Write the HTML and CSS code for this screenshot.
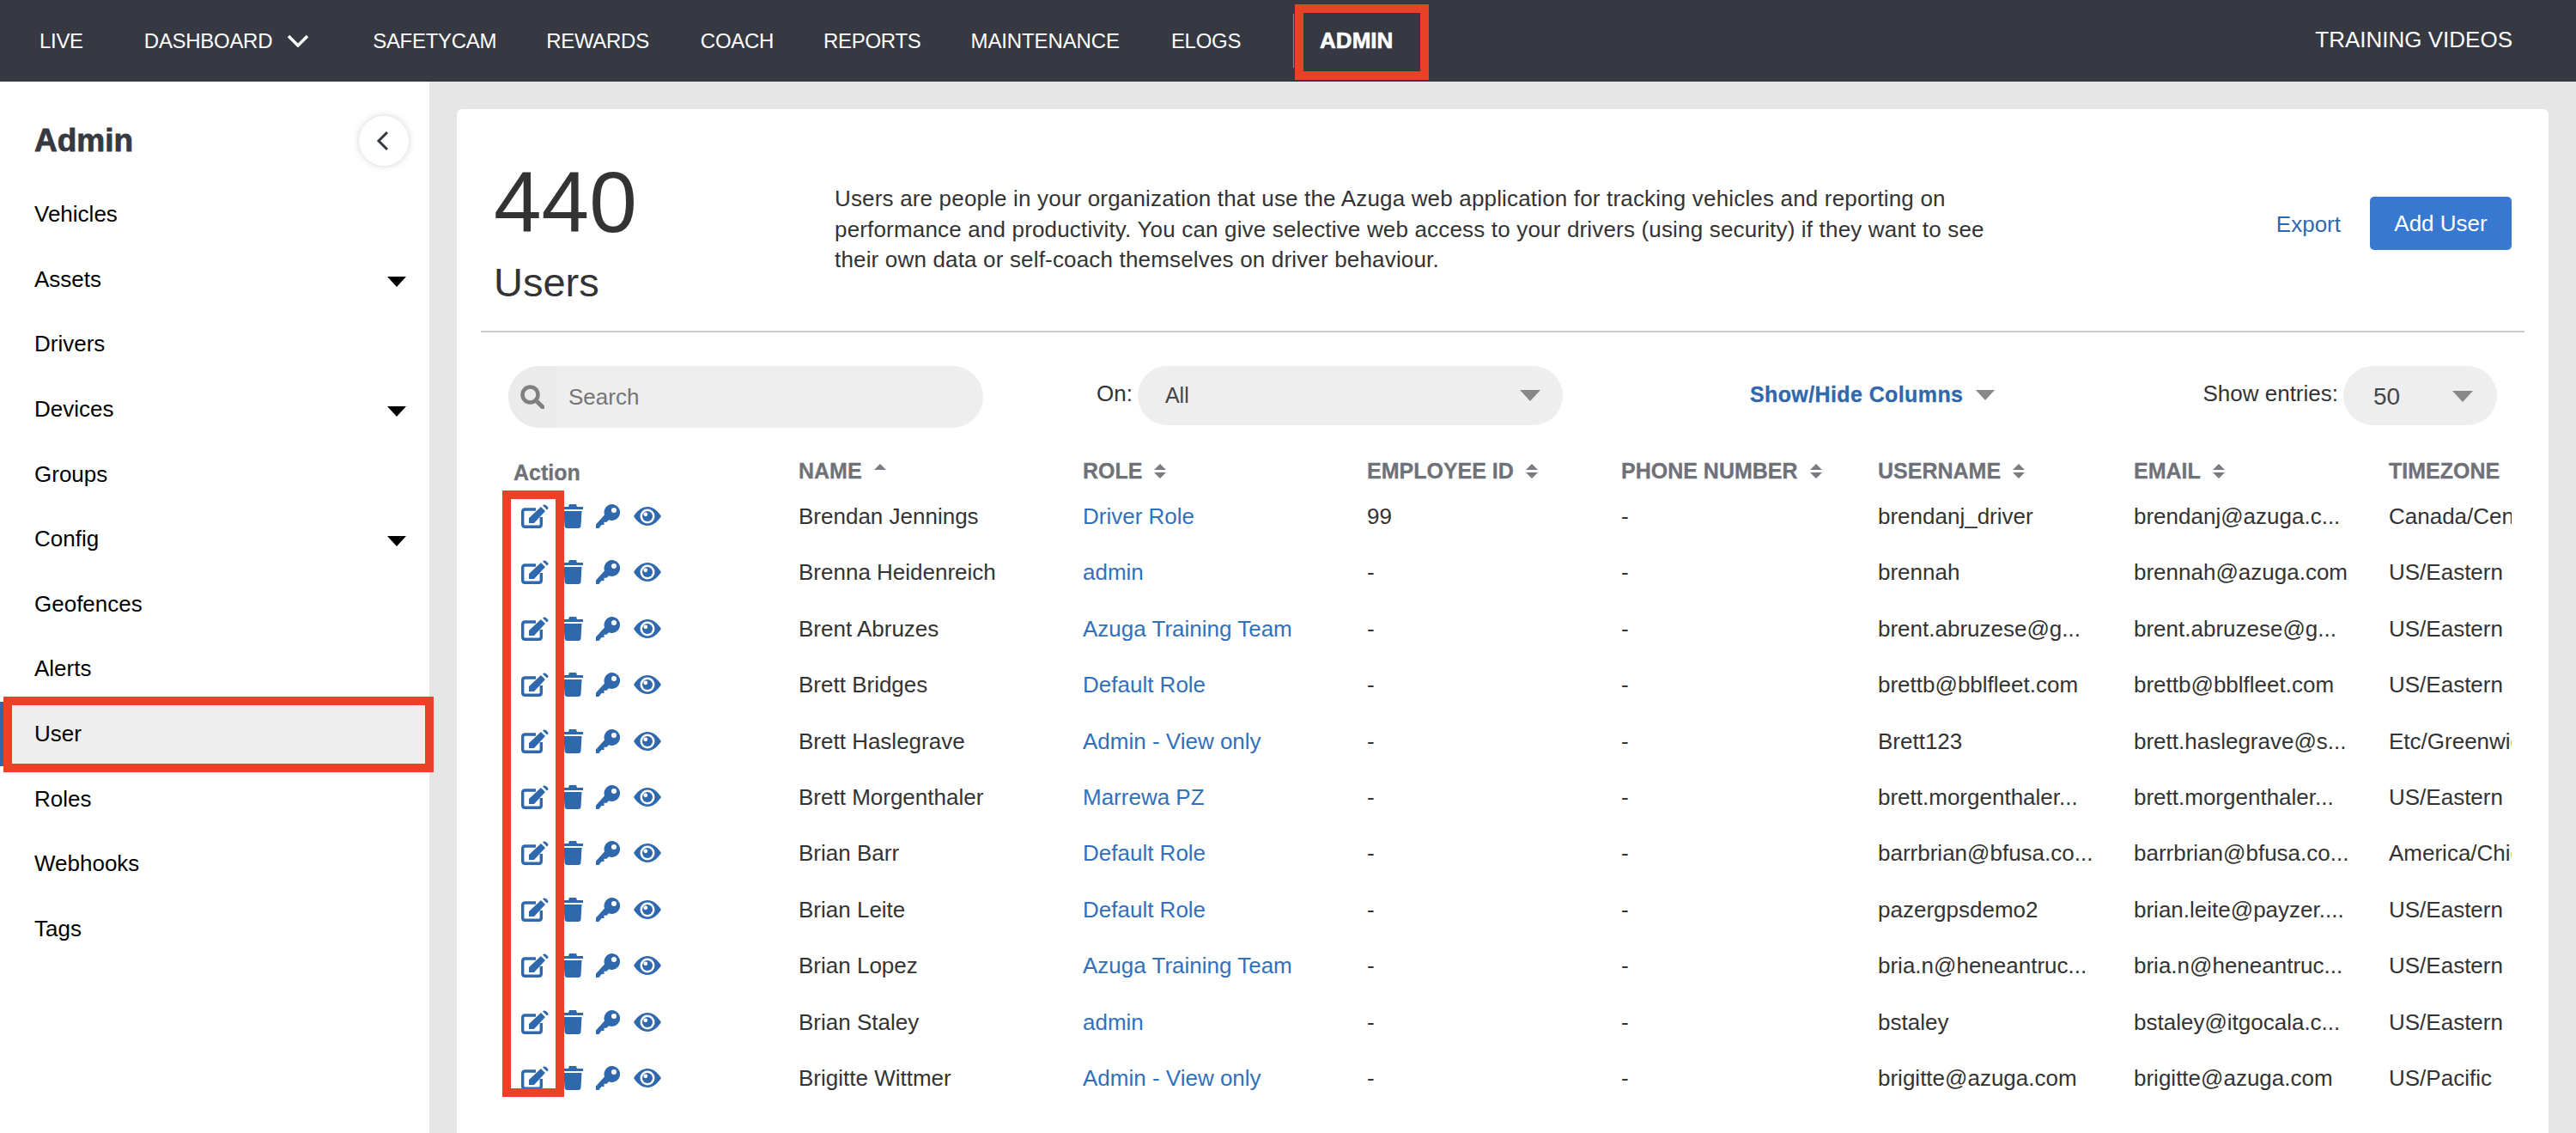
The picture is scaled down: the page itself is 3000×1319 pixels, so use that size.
FILE: index.html
```html
<!DOCTYPE html>
<html lang="en">
<head>
<meta charset="utf-8">
<title>Users - Admin</title>
<link rel="stylesheet" href="styles.css">
</head>
<body>
<svg class="defs" width="0" height="0" aria-hidden="true">
  <symbol id="i-edit" viewBox="0 0 32 28">
    <path d="M17 6H4.500Q1.700 6 1.700 8.800V23.500Q1.700 26.300 4.500 26.300H20.500Q23.300 26.300 23.300 23.500V15" fill="none" stroke="currentColor" stroke-width="3.400"/>
    <path d="M9 16 23 3 28 8 15 22H9Z M25 1.500 26.500 0.500Q28 0 30 2T31.500 5L30 6.500Z" fill="currentColor"/>
  </symbol>
  <symbol id="i-trash" viewBox="0 0 24 28">
    <path d="M8 0H16L17 3H24V6H0V3H7Z" fill="currentColor"/>
    <path d="M1.500 8H22.500L21.500 25Q21.300 28 18.500 28H5.500Q2.700 28 2.500 25Z" fill="currentColor"/>
  </symbol>
  <symbol id="i-key" viewBox="0 0 28 28">
    <path fill-rule="evenodd" d="M18.500 0A9.500 9.500 0 1 1 15 18.300L12.500 20.800H9.500V24H6.500L3.500 28H0V23.500L10 12.500A9.500 9.500 0 0 1 18.500 0ZM21 4A3 3 0 1 0 21 10 3 3 0 0 0 21 4Z" fill="currentColor"/>
  </symbol>
  <symbol id="i-eye" viewBox="0 0 32 22">
    <path d="M0 11C5 3.500 10 0 16 0S27 3.500 32 11C27 18.500 22 22 16 22S5 18.500 0 11Z" fill="currentColor"/>
    <circle cx="16" cy="11" r="8.500" fill="#fff"/>
    <circle cx="16" cy="11" r="6" fill="currentColor"/>
    <circle cx="13.800" cy="8.800" r="2.400" fill="#fff"/>
  </symbol>
  <symbol id="i-sort" viewBox="0 0 14 17">
    <path d="M7 0 14 7H0Z M0 10H14L7 17Z" fill="currentColor"/>
  </symbol>
  <symbol id="i-sort-up" viewBox="0 0 14 7">
    <path d="M7 0 14 7H0Z" fill="currentColor"/>
  </symbol>
</svg>

<header class="topbar">
  <nav class="mainnav">
    <a class="navlink">LIVE</a>
    <a class="navlink navlink-dash">DASHBOARD
      <svg class="dash-chevron" viewBox="0 0 26 15"><path d="M2 2 13 13 24 2" fill="none" stroke="currentColor" stroke-width="3.500"/></svg>
    </a>
    <a class="navlink navlink-safety">SAFETYCAM</a>
    <a class="navlink">REWARDS</a>
    <a class="navlink navlink-coach">COACH</a>
    <a class="navlink">REPORTS</a>
    <a class="navlink navlink-maint">MAINTENANCE</a>
    <a class="navlink navlink-elogs">ELOGS</a>
    <a class="navlink navlink-admin">ADMIN<span class="mark mark-admin"></span></a>
  </nav>
  <a class="navlink training">TRAINING VIDEOS</a>
</header>

<div class="layout">
  <aside class="sidebar">
    <div class="side-head">
      <h2 class="side-title">Admin</h2>
      <button class="collapse" aria-label="Collapse">
        <svg viewBox="0 0 15 24"><path d="M13 2 3 12 13 22" fill="none" stroke="currentColor" stroke-width="3"/></svg>
      </button>
    </div>
    <ul class="side-list">
      <li class="side-item">Vehicles</li>
      <li class="side-item">Assets<i class="side-caret"></i></li>
      <li class="side-item">Drivers</li>
      <li class="side-item">Devices<i class="side-caret"></i></li>
      <li class="side-item">Groups</li>
      <li class="side-item">Config<i class="side-caret"></i></li>
      <li class="side-item">Geofences</li>
      <li class="side-item">Alerts</li>
      <li class="side-item side-active">User<span class="mark mark-user"></span></li>
      <li class="side-item">Roles</li>
      <li class="side-item">Webhooks</li>
      <li class="side-item">Tags</li>
    </ul>
  </aside>

  <main class="content">
    <section class="card">
      <div class="head">
        <div class="count">
          <div class="count-num">440</div>
          <div class="count-label">Users</div>
        </div>
        <p class="desc">Users are people in your organization that use the Azuga web application for tracking vehicles and reporting on performance and productivity. You can give selective web access to your drivers (using security) if they want to see their own data or self-coach themselves on driver behaviour.</p>
        <div class="head-actions">
          <a class="export">Export</a>
          <button class="add-user">Add User</button>
        </div>
      </div>

      <div class="toolbar">
        <div class="search">
          <span class="search-addon">
            <svg viewBox="0 0 28 28"><circle cx="11.500" cy="11.500" r="9" fill="none" stroke="currentColor" stroke-width="4.500"/><path d="M18 18 26 26" stroke="currentColor" stroke-width="5" stroke-linecap="round"/></svg>
          </span>
          <span class="search-text">Search</span>
        </div>
        <label class="on-label">On:</label>
        <div class="select select-on">All<i class="caret caret-select"></i></div>
        <a class="columns">Show/Hide Columns<i class="caret caret-columns"></i></a>
        <label class="entries-label">Show entries:</label>
        <div class="select select-entries">50<i class="caret caret-select"></i></div>
      </div>

      <div class="table-area">
        <div class="table-clip">
          <div class="row row-head">
            <div class="th th-action">Action</div>
            <div class="th">NAME<svg class="sort sort-up"><use href="#i-sort-up"/></svg></div>
            <div class="th">ROLE<svg class="sort"><use href="#i-sort"/></svg></div>
            <div class="th">EMPLOYEE ID<svg class="sort"><use href="#i-sort"/></svg></div>
            <div class="th">PHONE NUMBER<svg class="sort"><use href="#i-sort"/></svg></div>
            <div class="th">USERNAME<svg class="sort"><use href="#i-sort"/></svg></div>
            <div class="th">EMAIL<svg class="sort"><use href="#i-sort"/></svg></div>
            <div class="th">TIMEZONE</div>
          </div>

          <div class="row">
            <div class="actions"><svg class="ic ic-edit"><use href="#i-edit"/></svg><svg class="ic ic-trash"><use href="#i-trash"/></svg><svg class="ic ic-key"><use href="#i-key"/></svg><svg class="ic ic-eye"><use href="#i-eye"/></svg></div>
            <div class="td">Brendan Jennings</div><div class="td"><a class="role">Driver Role</a></div><div class="td">99</div><div class="td">-</div><div class="td">brendanj_driver</div><div class="td">brendanj@azuga.c...</div><div class="td">Canada/Central</div>
          </div>
          <div class="row">
            <div class="actions"><svg class="ic ic-edit"><use href="#i-edit"/></svg><svg class="ic ic-trash"><use href="#i-trash"/></svg><svg class="ic ic-key"><use href="#i-key"/></svg><svg class="ic ic-eye"><use href="#i-eye"/></svg></div>
            <div class="td">Brenna Heidenreich</div><div class="td"><a class="role">admin</a></div><div class="td">-</div><div class="td">-</div><div class="td">brennah</div><div class="td">brennah@azuga.com</div><div class="td">US/Eastern</div>
          </div>
          <div class="row">
            <div class="actions"><svg class="ic ic-edit"><use href="#i-edit"/></svg><svg class="ic ic-trash"><use href="#i-trash"/></svg><svg class="ic ic-key"><use href="#i-key"/></svg><svg class="ic ic-eye"><use href="#i-eye"/></svg></div>
            <div class="td">Brent Abruzes</div><div class="td"><a class="role">Azuga Training Team</a></div><div class="td">-</div><div class="td">-</div><div class="td">brent.abruzese@g...</div><div class="td">brent.abruzese@g...</div><div class="td">US/Eastern</div>
          </div>
          <div class="row">
            <div class="actions"><svg class="ic ic-edit"><use href="#i-edit"/></svg><svg class="ic ic-trash"><use href="#i-trash"/></svg><svg class="ic ic-key"><use href="#i-key"/></svg><svg class="ic ic-eye"><use href="#i-eye"/></svg></div>
            <div class="td">Brett Bridges</div><div class="td"><a class="role">Default Role</a></div><div class="td">-</div><div class="td">-</div><div class="td">brettb@bblfleet.com</div><div class="td">brettb@bblfleet.com</div><div class="td">US/Eastern</div>
          </div>
          <div class="row">
            <div class="actions"><svg class="ic ic-edit"><use href="#i-edit"/></svg><svg class="ic ic-trash"><use href="#i-trash"/></svg><svg class="ic ic-key"><use href="#i-key"/></svg><svg class="ic ic-eye"><use href="#i-eye"/></svg></div>
            <div class="td">Brett Haslegrave</div><div class="td"><a class="role">Admin - View only</a></div><div class="td">-</div><div class="td">-</div><div class="td">Brett123</div><div class="td">brett.haslegrave@s...</div><div class="td">Etc/Greenwich</div>
          </div>
          <div class="row">
            <div class="actions"><svg class="ic ic-edit"><use href="#i-edit"/></svg><svg class="ic ic-trash"><use href="#i-trash"/></svg><svg class="ic ic-key"><use href="#i-key"/></svg><svg class="ic ic-eye"><use href="#i-eye"/></svg></div>
            <div class="td">Brett Morgenthaler</div><div class="td"><a class="role">Marrewa PZ</a></div><div class="td">-</div><div class="td">-</div><div class="td">brett.morgenthaler...</div><div class="td">brett.morgenthaler...</div><div class="td">US/Eastern</div>
          </div>
          <div class="row">
            <div class="actions"><svg class="ic ic-edit"><use href="#i-edit"/></svg><svg class="ic ic-trash"><use href="#i-trash"/></svg><svg class="ic ic-key"><use href="#i-key"/></svg><svg class="ic ic-eye"><use href="#i-eye"/></svg></div>
            <div class="td">Brian Barr</div><div class="td"><a class="role">Default Role</a></div><div class="td">-</div><div class="td">-</div><div class="td">barrbrian@bfusa.co...</div><div class="td">barrbrian@bfusa.co...</div><div class="td">America/Chicago</div>
          </div>
          <div class="row">
            <div class="actions"><svg class="ic ic-edit"><use href="#i-edit"/></svg><svg class="ic ic-trash"><use href="#i-trash"/></svg><svg class="ic ic-key"><use href="#i-key"/></svg><svg class="ic ic-eye"><use href="#i-eye"/></svg></div>
            <div class="td">Brian Leite</div><div class="td"><a class="role">Default Role</a></div><div class="td">-</div><div class="td">-</div><div class="td">pazergpsdemo2</div><div class="td">brian.leite@payzer....</div><div class="td">US/Eastern</div>
          </div>
          <div class="row">
            <div class="actions"><svg class="ic ic-edit"><use href="#i-edit"/></svg><svg class="ic ic-trash"><use href="#i-trash"/></svg><svg class="ic ic-key"><use href="#i-key"/></svg><svg class="ic ic-eye"><use href="#i-eye"/></svg></div>
            <div class="td">Brian Lopez</div><div class="td"><a class="role">Azuga Training Team</a></div><div class="td">-</div><div class="td">-</div><div class="td">bria.n@heneantruc...</div><div class="td">bria.n@heneantruc...</div><div class="td">US/Eastern</div>
          </div>
          <div class="row">
            <div class="actions"><svg class="ic ic-edit"><use href="#i-edit"/></svg><svg class="ic ic-trash"><use href="#i-trash"/></svg><svg class="ic ic-key"><use href="#i-key"/></svg><svg class="ic ic-eye"><use href="#i-eye"/></svg></div>
            <div class="td">Brian Staley</div><div class="td"><a class="role">admin</a></div><div class="td">-</div><div class="td">-</div><div class="td">bstaley</div><div class="td">bstaley@itgocala.c...</div><div class="td">US/Eastern</div>
          </div>
          <div class="row">
            <div class="actions"><svg class="ic ic-edit"><use href="#i-edit"/></svg><svg class="ic ic-trash"><use href="#i-trash"/></svg><svg class="ic ic-key"><use href="#i-key"/></svg><svg class="ic ic-eye"><use href="#i-eye"/></svg></div>
            <div class="td">Brigitte Wittmer</div><div class="td"><a class="role">Admin - View only</a></div><div class="td">-</div><div class="td">-</div><div class="td">brigitte@azuga.com</div><div class="td">brigitte@azuga.com</div><div class="td">US/Pacific</div>
          </div>
        </div>
        <span class="mark mark-actions"></span>
      </div>
    </section>
  </main>
</div>
</body>
</html>
```

FILE: styles.css
```css
* { box-sizing: border-box; }
html, body { margin: 0; height: 1319px; overflow: hidden; }
body {
  font-family: "Liberation Sans", Arial, sans-serif;
  font-size: 26px;
  color: #333;
  background: #e5e5e5;
}
.defs { position: absolute; }

/* red annotation boxes */
.mark {
  position: absolute;
  border: 10px solid #e94226;
  pointer-events: none;
}
.mark-admin { left: -29px; top: 5px; width: 156px; height: 88px; }
.mark-user { left: 4px; top: -6px; width: 501px; height: 88px; }
.mark-actions { left: -7px; top: 43px; width: 72px; height: 706px; }

/* top bar */
.topbar {
  height: 95px;
  background: #363842;
  color: #fff;
  display: flex;
  align-items: stretch;
  justify-content: space-between;
  padding: 0 74px 0 46px;
}
.mainnav { display: flex; align-items: stretch; gap: 58px; }
.navlink {
  display: flex;
  align-items: center;
  font-size: 24px;
  letter-spacing: -0.3px;
  color: #fff;
  white-space: nowrap;
  position: relative;
}
.navlink-dash { margin-left: 13px; gap: 17px; }
.dash-chevron { width: 26px; height: 15px; }
.navlink-safety { margin-left: 16px; }
.navlink-coach { margin-left: 2px; }
.navlink-maint { letter-spacing: -0.12px; }
.navlink-elogs { margin-left: 2px; }
.navlink-admin {
  margin-left: 34px;
  font-size: 26px;
  font-weight: 700;
  letter-spacing: 0;
  -webkit-text-stroke: 0.6px #fff;
}
.navlink-admin::before {
  content: "";
  position: absolute;
  left: -31px;
  top: 16px;
  height: 63px;
  width: 1px;
  background: #8a8b92;
}
.training { font-size: 26px; letter-spacing: 0; padding-bottom: 2px; }

/* layout */
.layout { display: flex; height: 1224px; }
.sidebar { width: 500px; background: #fff; flex: none; }
.side-head {
  height: 117px;
  display: flex;
  align-items: flex-start;
  justify-content: space-between;
  padding: 40px 24px 0 40px;
}
.side-title {
  margin: 7px 0 0;
  font-size: 37px;
  line-height: 44px;
  font-weight: 700;
  color: #363842;
  -webkit-text-stroke: 0.8px #363842;
}
.collapse {
  width: 58px;
  height: 58px;
  border: 0;
  padding: 0 4px 0 0;
  border-radius: 50%;
  background: #fff;
  box-shadow: 0 0 8px rgba(0, 0, 0, 0.18);
  color: #363842;
  display: flex;
  align-items: center;
  justify-content: center;
}
.collapse svg { width: 15px; height: 24px; }
.side-list { list-style: none; margin: 0; padding: 0; }
.side-item {
  height: 75.6px;
  padding: 0 27px 0 40px;
  display: flex;
  align-items: center;
  justify-content: space-between;
  color: #000;
  position: relative;
}
.side-caret {
  width: 0;
  height: 0;
  border-left: 11px solid transparent;
  border-right: 11px solid transparent;
  border-top: 12px solid #000;
  margin-top: 5px;
}
.side-active {
  background: #eee;
  box-shadow: inset 4px 0 0 #2f68ad;
}

/* card */
.content { flex: 1; padding: 32px 32px 0; min-width: 0; }
.card {
  height: 1192px;
  background: #fff;
  border-radius: 6px 6px 0 0;
}
.head {
  height: 260px;
  margin: 0 28px;
  padding-left: 15px;
  border-bottom: 2px solid #ccc;
  display: flex;
  align-items: flex-start;
}
.count { width: 397px; flex: none; padding-top: 53px; }
.count-num { font-size: 100px; line-height: 110px; color: #333; }
.count-label { font-size: 47px; line-height: 60px; margin-top: 9px; color: #333; }
.desc {
  margin: 87px 0 0;
  width: 1345px;
  flex: none;
  font-size: 26px;
  letter-spacing: 0.17px;
  line-height: 35.7px;
  color: #333;
}
.head-actions {
  margin: 102px 0 0 auto;
  padding-right: 15px;
  display: flex;
  align-items: center;
  gap: 34px;
}
.export { color: #2f68ad; font-size: 26px; padding-top: 2px; }
.add-user {
  width: 165px;
  height: 62px;
  border: 0;
  border-radius: 5px;
  background: #3778d0;
  color: #fff;
  font: inherit;
}

/* toolbar */
.toolbar {
  margin-top: 39px;
  padding: 0 60px;
  height: 72px;
  display: flex;
  align-items: flex-start;
}
.search {
  width: 553px;
  height: 72px;
  border-radius: 36px;
  background: #eee;
  display: flex;
  align-items: center;
  overflow: hidden;
  flex: none;
}
.search-addon {
  width: 55px;
  height: 100%;
  background: #ebebeb;
  display: flex;
  align-items: center;
  justify-content: flex-end;
  padding-right: 13px;
  color: #808080;
}
.search-addon svg { width: 28px; height: 28px; }
.search-text { margin-left: 15px; color: #757575; }
.on-label { margin: 15px 6px 0 132px; line-height: 34px; }
.select {
  height: 69px;
  border-radius: 35px;
  background: #eee;
  display: flex;
  align-items: center;
  justify-content: space-between;
  flex: none;
}
.select-on { width: 495px; padding: 0 26px 0 32px; color: #444; font-size: 25px; }
.select-entries { width: 179px; padding: 2px 28px 0 35px; font-size: 28px; color: #444; }
.caret {
  width: 0;
  height: 0;
  border-left: 12px solid transparent;
  border-right: 12px solid transparent;
  border-top: 13px solid #888;
}
.columns {
  margin: 16px 0 0 218px;
  color: #2f68ad;
  font-weight: 700;
  font-size: 25px;
  line-height: 34px;
  letter-spacing: 0.4px;
  display: flex;
  align-items: center;
  gap: 15px;
  -webkit-text-stroke: 0.3px #2f68ad;
}
.caret-columns { border-left-width: 11px; border-right-width: 11px; border-top-width: 12px; margin-top: 2px; }
.entries-label { margin: 15px 6px 0 auto; line-height: 34px; }

/* table */
.table-area { position: relative; margin: 30px 0 0 60px; }
.table-clip { width: 2333px; overflow: hidden; }
.row {
  display: grid;
  grid-template-columns: 338px 331px 331px 296px 299px 298px 297px 160px;
  height: 65.4px;
  align-items: center;
  white-space: nowrap;
}
.row-head { height: 40.3px; }
.th {
  font-size: 25px;
  font-weight: 700;
  color: #6f7178;
  display: flex;
  align-items: center;
  gap: 14px;
  -webkit-text-stroke: 0.3px #6f7178;
}
.th-action { padding: 4px 0 0 6px; }
.sort { width: 14px; height: 17px; color: #7a7c82; flex: none; }
.sort-up { height: 7px; margin-top: -10px; }
.td { overflow: hidden; color: #333; padding-top: 1px; }
.role { color: #3270bb; }
.actions { display: flex; align-items: center; padding-left: 15px; height: 28px; }
.ic { height: 28px; color: #2f68ad; flex: none; }
.ic-edit { width: 32px; }
.ic-trash { width: 24px; margin-left: 16px; }
.ic-key { width: 28px; margin-left: 15px; }
.ic-eye { width: 32px; height: 22px; margin-left: 16px; }
```
